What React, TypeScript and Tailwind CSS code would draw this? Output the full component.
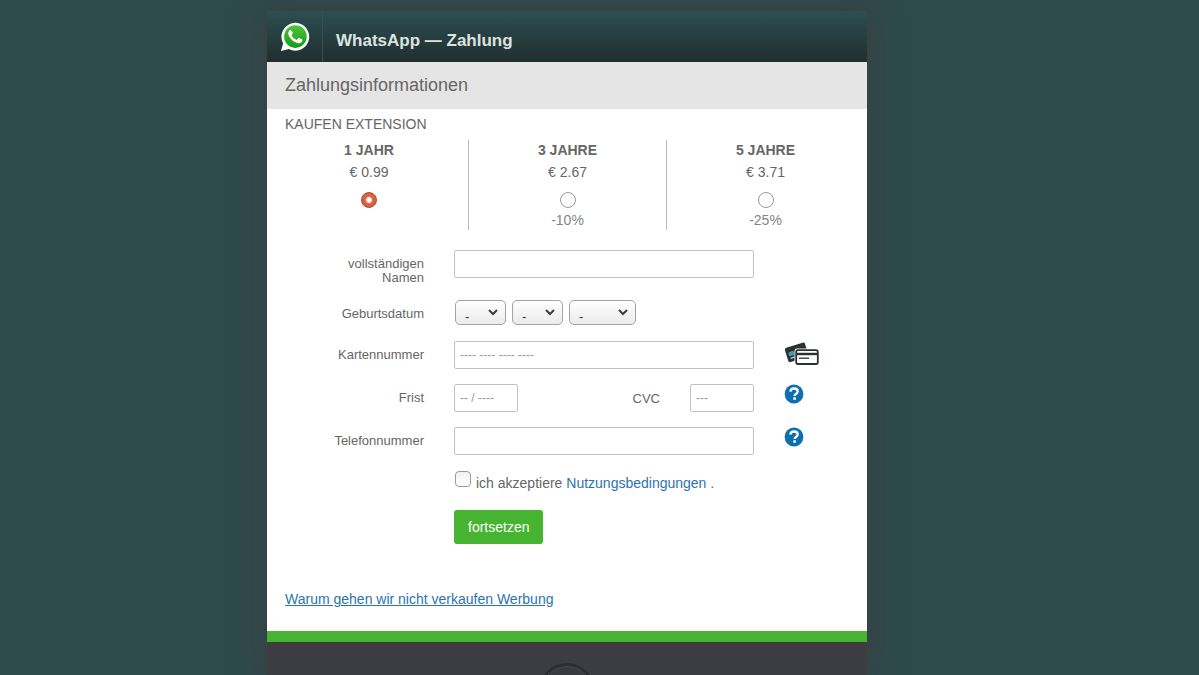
import type { ReactNode } from "react";

const plans = [
  { id: "1", title: "1 JAHR", price: "€ 0.99", discount: "" },
  { id: "3", title: "3 JAHRE", price: "€ 2.67", discount: "-10%" },
  { id: "5", title: "5 JAHRE", price: "€ 3.71", discount: "-25%" },
];

const textBox =
  "h-7 rounded-xs border border-[#c2c2c2] bg-white px-[5px] text-xs text-[#555] outline-none placeholder:text-[#999] placeholder:opacity-100";

function Logo() {
  return (
    <svg viewBox="0 0 30 30" className="size-[30px]" aria-hidden="true">
      <defs>
        <linearGradient id="bubble" x1="0" y1="0" x2="0" y2="1">
          <stop offset="0" stopColor="#52c43a" />
          <stop offset="1" stopColor="#12991a" />
        </linearGradient>
      </defs>
      <path d="M1 29 3.1 21.4A13.9 13.9 0 1 1 8.9 27.1Z" fill="#fbfffb" />
      <circle cx="15.4" cy="14.6" r="11.3" fill="url(#bubble)" />
      <path
        d="M11.1 8.5c-.5-.6-1.1-.5-1.6 0-1.7 1.7-1.6 3.8-.1 6.2 2 3.1 4.6 5.3 7.9 6.3 2.3.7 4.5-.3 5-2.5.1-.5.1-.9-.3-1.2l-2.7-1.4c-.5-.2-.8-.1-1.1.3l-1 1.3c-.3.4-.6.4-1 .2-2-.9-3.5-2.3-4.5-4.1-.2-.4-.2-.6.1-1l.8-1c.3-.4.3-.7.1-1.1Z"
        fill="#fff"
      />
    </svg>
  );
}

function CardsIcon() {
  return (
    <svg viewBox="0 0 35 24" className="h-6 w-[35px]" role="img" aria-label="Kreditkarte">
      <g transform="rotate(-17 12 11)">
        <rect x="2" y="4" width="21" height="15" rx="2" fill="#2b3033" />
        <rect x="4.2" y="9" width="6" height="4.4" rx="1.6" fill="#4c9aa5" />
        <path d="M5 15.5h4" stroke="#c9dadd" strokeWidth="1.4" />
      </g>
      <rect x="10.5" y="7.6" width="24.5" height="16.4" rx="2.5" fill="#fff" />
      <rect x="12.2" y="9.2" width="21.6" height="13.8" rx="1.8" fill="#fff" stroke="#2b3033" strokeWidth="1.8" />
      <path d="M12 13h22" stroke="#2b3033" strokeWidth="2.4" />
      <path d="M15 17.2h10" stroke="#2b3033" strokeWidth="1.3" />
    </svg>
  );
}

function HelpButton({ label }: { label: string }) {
  return (
    <button type="button" aria-label={label} className="size-5">
      <svg viewBox="0 0 20 20" className="size-5" aria-hidden="true">
        <circle cx="10" cy="10" r="9.4" fill="#0b6fb0" />
        <path
          d="M6.3 7.6C6.6 5.4 8 4.5 10 4.5c2.1 0 3.7 1.1 3.7 2.9 0 1.5-.9 2-1.9 2.7-.9.6-1.2 1-1.2 2"
          fill="none"
          stroke="#fff"
          strokeWidth="2.3"
        />
        <rect x="9.3" y="13.3" width="2.6" height="2.5" fill="#fff" />
      </svg>
    </button>
  );
}

function Row({ label, htmlFor, children, icon }: { label: string; htmlFor: string; children: ReactNode; icon?: ReactNode }) {
  return (
    <div className="flex gap-[30px]">
      <label htmlFor={htmlFor} className="w-[139px] shrink-0 pt-[7px] pl-12 text-right text-[13px] leading-[14px]">
        {label}
      </label>
      <div className="flex w-[300px] justify-between">{children}</div>
      {icon}
    </div>
  );
}

function DateSelect({ label, id, wide = false }: { label: string; id?: string; wide?: boolean }) {
  return (
    <span className="relative flex">
      <select
        id={id}
        aria-label={label}
        className={`${wide ? "w-[67px]" : "w-[51px]"} h-[25px] appearance-none rounded-[5px] border border-[#a3a3a3] bg-linear-to-b from-white to-[#ebebeb] pt-[7px] pl-[9px] text-[13px] text-[#333] outline-none`}
      >
        <option>-</option>
      </select>
      <svg viewBox="0 0 10 7" className="pointer-events-none absolute top-[9px] right-2 h-[7px] w-2.5" aria-hidden="true">
        <path d="M1 1 5 5 9 1" fill="none" stroke="#3c3f42" strokeWidth="2" />
      </svg>
    </span>
  );
}

export default function App() {
  return (
    <div className="min-h-screen bg-[#2f4a4b] pt-[11px] pr-[65px] font-['Liberation_Sans',Arial,sans-serif] text-sm text-[#666]">
      <div className="mx-auto flex min-h-[calc(100vh-11px)] max-w-[600px] flex-col bg-[#3c3d42] shadow-[0_0_26px_#3d3d41]">
        <header className="flex h-[51px] items-stretch bg-linear-to-b from-[#2d4f52] to-[#202e2e]">
          <div className="flex w-14 justify-center border-r border-[#345052] pt-[11px]">
            <Logo />
          </div>
          <h1 className="pt-2 pl-[13px] text-[17px] leading-[43px] font-bold text-[#dce2e2]">WhatsApp — Zahlung</h1>
        </header>

        <main className="bg-white">
          <h2 className="bg-[#e5e5e5] px-[18px] text-lg leading-[47px]">Zahlungsinformationen</h2>
          <form className="pt-[5px]" onSubmit={(event) => event.preventDefault()}>
            <fieldset>
              <legend className="px-[18px] leading-5">KAUFEN EXTENSION</legend>
              <div className="mx-[3px] mt-[6px] grid grid-cols-3">
                {plans.map((plan) => (
                  <label key={plan.id} className="flex h-[90px] flex-col items-center border-[#b8b8b8] not-first:border-l">
                    <span className="leading-5 font-bold">{plan.title}</span>
                    <span className="mt-0.5 leading-5">{plan.price}</span>
                    <input
                      type="radio"
                      name="plan"
                      value={plan.id}
                      defaultChecked={plan.id === "1"}
                      className="mt-[10px] size-4 shrink-0 appearance-none rounded-full border border-[#999] bg-white checked:border-[#b04a30] checked:bg-[radial-gradient(circle,#fffaf0_2px,#d65f3f_4px)]"
                    />
                    <span className="mt-0.5 leading-5 text-[#858585]">{plan.discount}</span>
                  </label>
                ))}
              </div>
            </fieldset>

            <div className="mt-5 px-[18px]">
              <Row label="vollständigen Namen" htmlFor="name">
                <input id="name" type="text" className={`${textBox} w-full`} />
              </Row>
              <div className="mt-[15px]">
                <Row label="Geburtsdatum" htmlFor="day">
                  <div className="flex gap-[6px] pl-px">
                    <DateSelect id="day" label="Tag" />
                    <DateSelect label="Monat" />
                    <DateSelect label="Jahr" wide />
                  </div>
                </Row>
              </div>
              <div className="mt-4">
                <Row label="Kartennummer" htmlFor="card" icon={<CardsIcon />}>
                  <input id="card" type="text" placeholder="---- ---- ---- ----" className={`${textBox} w-full`} />
                </Row>
              </div>
              <div className="mt-[15px]">
                <Row label="Frist" htmlFor="expiry" icon={<HelpButton label="Hilfe zu CVC" />}>
                  <input id="expiry" type="text" placeholder="-- / ----" className={`${textBox} w-16`} />
                  <div className="flex gap-[30px]">
                    <label htmlFor="cvc" className="pt-2 text-[13px] leading-[14px]">
                      CVC
                    </label>
                    <input id="cvc" type="text" placeholder="---" className={`${textBox} w-16`} />
                  </div>
                </Row>
              </div>
              <div className="mt-[15px]">
                <Row label="Telefonnummer" htmlFor="phone" icon={<HelpButton label="Hilfe zur Telefonnummer" />}>
                  <input id="phone" type="tel" className={`${textBox} w-full`} />
                </Row>
              </div>

              <div className="ml-[169px]">
                <div className="mt-4 flex pl-px">
                  <input
                    id="terms"
                    type="checkbox"
                    className="size-4 appearance-none rounded-sm border border-[#999] bg-linear-to-b from-[#f1f1f1] to-white checked:bg-[#46b430]"
                  />
                  <p className="pt-0.5 pl-[5px] leading-5">
                    <label htmlFor="terms">ich akzeptiere</label>{" "}
                    <a href="#terms" className="text-[#2b74b0]">
                      Nutzungsbedingungen .
                    </a>
                  </p>
                </div>
                <button type="submit" className="mt-[17px] h-[34px] rounded-[3px] bg-[#46b430] px-[14px] text-white">
                  fortsetzen
                </button>
              </div>
              <p className="mt-[45px] pb-[22px] leading-5">
                <a href="#werbung" className="text-[#2b74b0] underline">
                  Warum gehen wir nicht verkaufen Werbung
                </a>
              </p>
            </div>
          </form>
        </main>

        <footer className="flex grow flex-col items-center border-t-[11px] border-[#46b430] pt-[21px]">
          <div className="h-3 overflow-hidden">
            <div className="size-14 rounded-full border-[3px] border-[#2d2e32] bg-[#3a3b40] shadow-[inset_0_1px_0_#4a4b50]" />
          </div>
        </footer>
      </div>
    </div>
  );
}
